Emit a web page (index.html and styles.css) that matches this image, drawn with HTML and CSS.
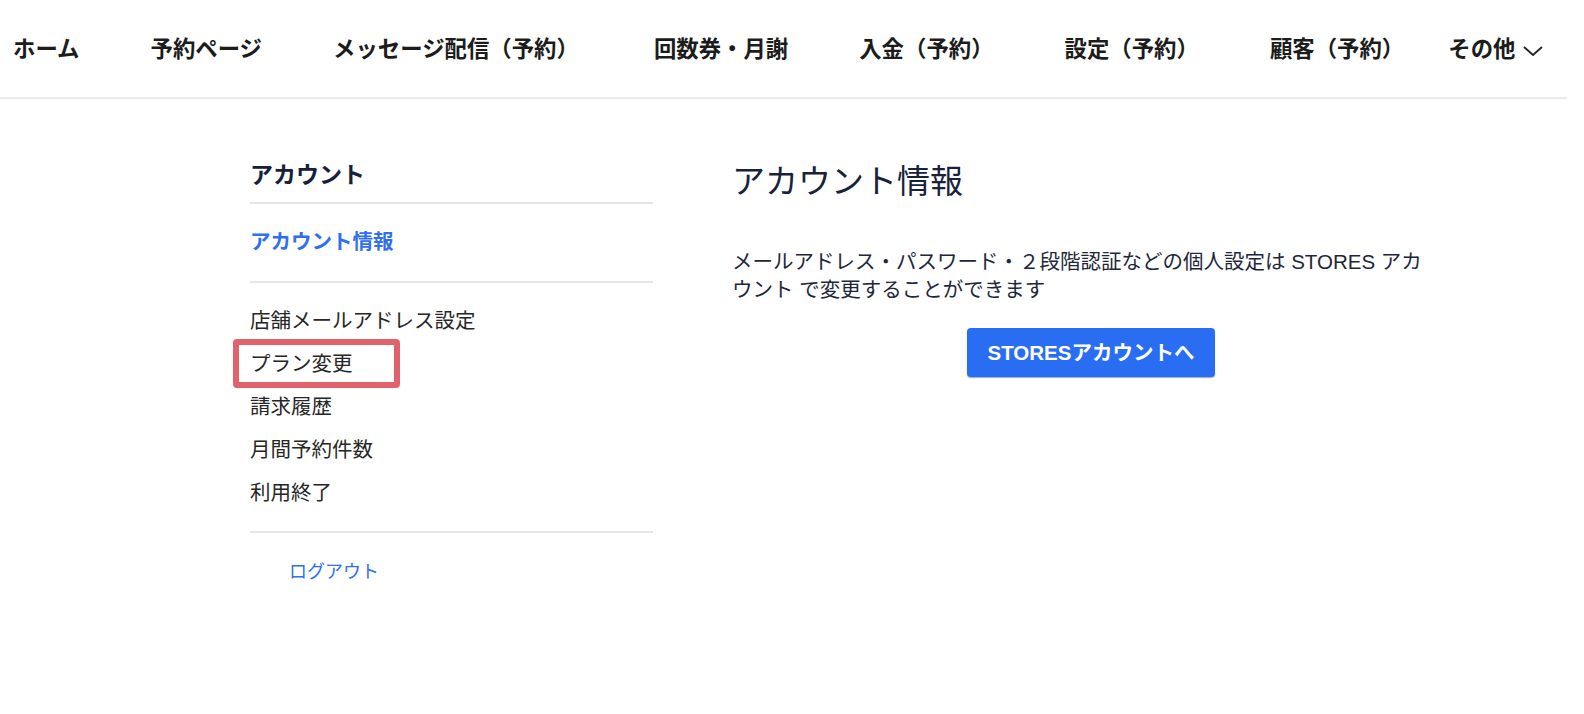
FILE: index.html
```html
<!DOCTYPE html>
<html lang="ja">
  <head>
    <meta charset="UTF-8" />
    <meta name="viewport" content="width=device-width, initial-scale=1.0" />
    <title>アカウント情報</title>
    <link rel="stylesheet" href="styles.css">
  </head>
  <body>
    <header class="global-nav">
      <nav class="nav-list">
        <a class="nav-item" href="#">ホーム</a>
        <a class="nav-item" href="#">予約ページ</a>
        <a class="nav-item wide" href="#">メッセージ配信（予約）</a>
        <a class="nav-item" href="#">回数券・月謝</a>
        <a class="nav-item" href="#">入金（予約）</a>
        <a class="nav-item" href="#">設定（予約）</a>
        <a class="nav-item" href="#">顧客（予約）</a>
        <button class="nav-more" type="button">
          その他
          <svg class="chevron" width="20" height="10" viewBox="0 0 20 10">
            <polyline points="1,1 10,9 19,1" fill="none" stroke="#222" stroke-width="1.8" />
          </svg>
        </button>
      </nav>
    </header>

    <div class="page">
      <aside class="side-menu">
        <h2 class="side-title">アカウント</h2>
        <div class="side-current">
          <a href="#">アカウント情報</a>
        </div>
        <ul class="side-links">
          <li><a href="#">店舗メールアドレス設定</a></li>
          <li class="marked"><a href="#">プラン変更</a></li>
          <li><a href="#">請求履歴</a></li>
          <li><a href="#">月間予約件数</a></li>
          <li><a href="#">利用終了</a></li>
        </ul>
        <a class="logout" href="#">ログアウト</a>
      </aside>

      <main class="account-main">
        <h1 class="page-title">アカウント情報</h1>
        <p class="notice">
          メールアドレス・パスワード・２段階認証などの個人設定は STORES アカウント で変更することができます
        </p>
        <div class="actions">
          <a class="primary-btn" href="#">STORESアカウントへ</a>
        </div>
      </main>
    </div>
  </body>
</html>
```

FILE: styles.css
```css
body {
  margin: 0;
  background-color: #fff;
  font-family: "Liberation Sans", "Noto Sans CJK JP", sans-serif;
  color: #222;
}
a {
  text-decoration: none;
  color: inherit;
}

/* top navigation */
.global-nav {
  height: 99px;
  box-sizing: border-box;
  padding-top: 3px;
  margin-right: 17px;
  border-bottom: 2px solid #ebebeb;
  display: flex;
  align-items: center;
}
.nav-list {
  display: flex;
  align-items: center;
  gap: 71px;
  padding-left: 13px;
}
.nav-item {
  font-size: 22.4px;
  font-weight: bold;
  line-height: 30px;
  color: #1c1c1c;
  white-space: nowrap;
}
.nav-item.wide {
  margin-right: 4px;
}
.nav-more {
  margin-left: -27px;
  padding: 0;
  border: none;
  background: none;
  font-family: inherit;
  font-size: 22.4px;
  font-weight: bold;
  line-height: 30px;
  color: #1c1c1c;
  display: flex;
  align-items: center;
  gap: 8px;
  cursor: pointer;
}
.chevron {
  margin-top: 2px;
}

/* page body */
.page {
  display: flex;
  gap: 79px;
  padding: 59px 0 0 250px;
}

.side-menu {
  width: 403px;
}
.side-title {
  margin: 0;
  padding: 2px 0 12px;
  border-bottom: 2px solid #e6e6e6;
  font-size: 23px;
  line-height: 30px;
  color: #16203a;
}
.side-current {
  padding: 24px 0 25px;
  border-bottom: 2px solid #e6e6e6;
  font-size: 20.5px;
  font-weight: bold;
  line-height: 28px;
  color: #2f6ff0;
}
.side-links {
  list-style: none;
  margin: 0;
  padding: 16px 0 17px;
  border-bottom: 2px solid #e6e6e6;
}
.side-links li {
  position: relative;
  font-size: 20.5px;
  line-height: 43px;
  color: #262626;
}
.side-links .marked::after {
  content: "";
  position: absolute;
  left: -17px;
  top: -3px;
  width: 167px;
  height: 49px;
  box-sizing: border-box;
  border: 6px solid #e2626c;
  border-radius: 4px;
}
.logout {
  display: block;
  padding: 26px 0 0 39px;
  font-size: 18px;
  line-height: 26px;
  color: #2f6ff0;
}

.account-main {
  width: 718px;
  padding-top: 2px;
}
.page-title {
  margin: 0;
  font-size: 33px;
  font-weight: normal;
  line-height: 44px;
  color: #18223a;
}
.notice {
  max-width: 700px;
  margin: 44px 0 0;
  font-size: 20.5px;
  line-height: 28px;
  color: #1d273a;
}
.actions {
  margin-top: 24px;
  text-align: center;
}
.primary-btn {
  display: inline-block;
  padding: 11px 21px;
  border-radius: 4px;
  background-color: #296ef2;
  box-shadow: 0 1px 1px rgba(20, 80, 110, 0.45);
  font-size: 20.5px;
  font-weight: bold;
  line-height: 27px;
  color: #fff;
}
```
